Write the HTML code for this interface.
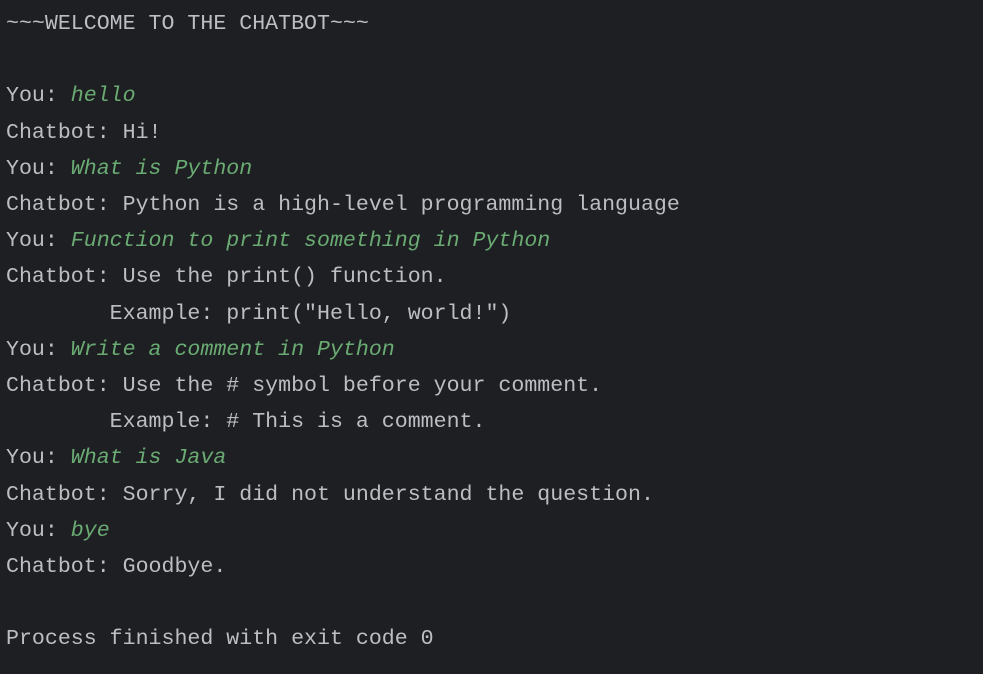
<!DOCTYPE html>
<html><head><style>
html,body{margin:0;padding:0;background:#1e1f22;width:983px;height:674px;overflow:hidden}
pre{margin:0;position:absolute;left:6px;top:6px;font-family:"Liberation Mono","DejaVu Sans Mono",monospace;font-size:21.6px;line-height:36.2px;color:#bcbec4}
i{color:#6aab73;font-style:italic}
</style></head><body>
<pre>~~~WELCOME TO THE CHATBOT~~~

You: <i>hello</i>
Chatbot: Hi!
You: <i>What is Python</i>
Chatbot: Python is a high-level programming language
You: <i>Function to print something in Python</i>
Chatbot: Use the print() function.
        Example: print("Hello, world!")
You: <i>Write a comment in Python</i>
Chatbot: Use the # symbol before your comment.
        Example: # This is a comment.
You: <i>What is Java</i>
Chatbot: Sorry, I did not understand the question.
You: <i>bye</i>
Chatbot: Goodbye.

Process finished with exit code 0</pre>
</body></html>
